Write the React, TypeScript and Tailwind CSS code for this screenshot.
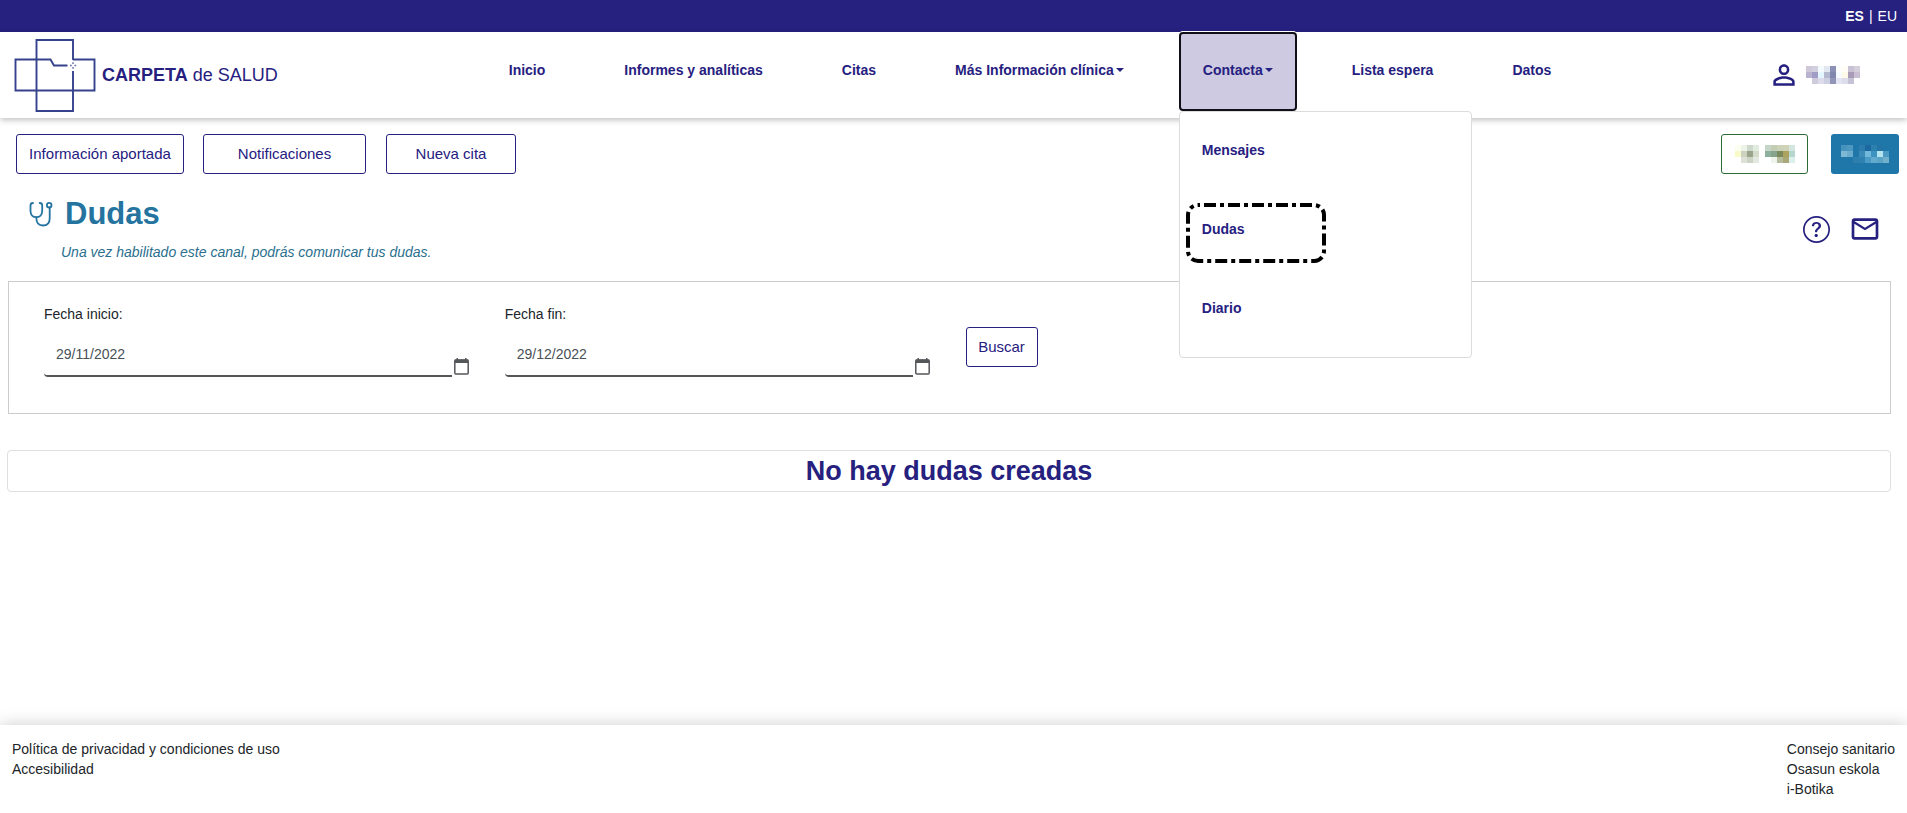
import { useState } from 'react'
import { BsQuestionCircle } from 'react-icons/bs'
import { MdMailOutline, MdPersonOutline } from 'react-icons/md'

const navItems = [
  { label: 'Inicio' },
  { label: 'Informes y analíticas' },
  { label: 'Citas' },
  { label: 'Más Información clínica', menu: [] },
  { label: 'Contacta', menu: ['Mensajes', 'Dudas', 'Diario'] },
  { label: 'Lista espera' },
  { label: 'Datos' },
]

const userTiles = [
  ['#cfc8d8', '#d2cfdf', '#f4fbff', '#e3e8f0', '#8b90b4', '#fdfdfd', '#fffdf5', '#c9c2d4', '#d5cfdc'],
  ['#b9b3cf', '#9f9cc6', '#e4f7ff', '#b5b9d0', '#8287ae', '#f6fbff', '#fff9ea', '#a79bb8', '#c8c0d2'],
  ['#ffffff', '#cfcbdd', '#dddcea', '#cdd0e0', '#9294b8', '#e4e4f2', '#dcdcea', '#c6c3d6', '#ffffff'],
]

const greenTiles = [
  ['#fbfff0', '#eef3e8', '#cfd8cc', '#e2ebe0', '#ffffff', '#c4d6c8', '#c3cdb4', '#cdd3b8', '#cfd4b8', '#d4e6e0'],
  ['#f8fbc8', '#cdd1c0', '#9aa48c', '#d4dccc', '#ffffff', '#8db09c', '#86a48c', '#7a8a5c', '#ada25e', '#b4d6cc'],
  ['#ffffff', '#dde0d4', '#cdd3c4', '#e3e8e0', '#ffffff', '#ffffff', '#eef3ec', '#b4bc9c', '#a9a878', '#dcefec'],
]

const blueTiles = [
  ['#4593bd', '#4c98c1', '#1f76a8', '#2c7cae', '#1b69a0', '#2c80ae', '#2475a6', '#1f76a8'],
  ['#7fb8d4', '#6aacce', '#1f76a8', '#3a8ab8', '#72b8da', '#3c92c0', '#b4e4f0', '#4b9ac4'],
  ['#1f76a8', '#1f76a8', '#2d7fad', '#2f82b0', '#4a9cc6', '#62aace', '#5aa4c8', '#72b0cc'],
]

function Tiles({ rows }: { rows: string[][] }) {
  return (
    <svg width={rows[0].length * 6} height={rows.length * 6} shapeRendering="crispEdges" aria-hidden="true">
      {rows.map((row, y) =>
        row.map((color, x) => <rect key={`${x}-${y}`} x={x * 6} y={y * 6} width="6" height="6" fill={color} />)
      )}
    </svg>
  )
}

function Logo() {
  return (
    <svg width="82" height="74" viewBox="0 0 82 74" fill="none" stroke="#36438c" strokeWidth="1.9" aria-hidden="true">
      <path d="M59 22V2H22.500V73H59V33" />
      <path d="M59 21.500H80.500V52.500H1.500V21.500H36.500L40 27.500H53.500" />
      <path d="M56 27.500h1.800M60.400 27.500h1.800M59 24.300v1.800M59 29v1.800" strokeWidth="1.500" stroke="#6a74ac" />
    </svg>
  )
}

function Stethoscope() {
  return (
    <svg width="24" height="26" viewBox="0 0 24 26" fill="none" stroke="#2574a0" strokeWidth="1.8" strokeLinecap="round" aria-hidden="true">
      <path d="M4 2C2.200 2 1.500 2.800 1.500 4.500V10c0 3.800 2.400 6.200 5.800 6.200S13.200 13.800 13.200 10V4.500C13.200 2.800 12.500 2 10.700 2" />
      <path d="M7.300 16.500C7.300 21.500 9.500 24.500 14 24.500s6.700-2.600 6.700-7V6.500" />
      <circle cx="20.200" cy="4.200" r="2.300" />
    </svg>
  )
}

function CalendarIcon() {
  return (
    <svg width="15" height="17" viewBox="0 0 15 17" aria-hidden="true">
      <path d="M2.500 0h1.500v2h-1.500zM11 0h1.500v2H11z" fill="#55565a" />
      <rect x="0.800" y="2" width="13.400" height="14" rx="1" fill="none" stroke="#55565a" strokeWidth="1.500" />
      <path d="M0.800 1.500h13.400v3.500H0.800z" fill="#55565a" />
    </svg>
  )
}

function Caret() {
  return (
    <svg width="8" height="4" viewBox="0 0 8 4" className="ml-0.5" aria-hidden="true">
      <path d="M0 0h8L4 4z" fill="currentColor" />
    </svg>
  )
}

function DateField({ id, label, initial }: { id: string; label: string; initial: string }) {
  const [value, setValue] = useState(initial)

  return (
    <div className="pr-5 pl-4">
      <label htmlFor={id} className="block text-sm text-[#212529]">
        {label}
      </label>
      <div className="mt-3 flex items-end gap-0.5">
        <input
          id={id}
          value={value}
          onChange={(e) => setValue(e.target.value)}
          className="h-[41px] min-w-0 flex-1 rounded-l border-b-2 border-[#55565a] bg-transparent px-3 pb-1 text-sm text-[#495057] outline-none"
        />
        <button type="button" aria-label="Abrir calendario" className="mb-0.5">
          <CalendarIcon />
        </button>
      </div>
    </div>
  )
}

function ContactMenu({ items }: { items: string[] }) {
  return (
    <ul className="absolute top-full left-0 z-10 w-[293px] rounded border border-[#dcdcdc] bg-white pb-2">
      {items.map((item) => (
        <li key={item} className="relative">
          <a href="#" className="flex h-[79px] items-center px-[22px] pb-1 font-bold">
            {item}
          </a>
          {item === 'Dudas' && (
            <svg className="pointer-events-none absolute top-3 left-1.5" width="140" height="60" aria-hidden="true">
              <rect
                x="2"
                y="2"
                width="136"
                height="56"
                rx="10"
                fill="none"
                stroke="#000"
                strokeWidth="4"
                strokeDasharray="12 4 4 4"
                strokeDashoffset="-6"
              />
            </svg>
          )}
        </li>
      ))}
    </ul>
  )
}

function Header() {
  const [open, setOpen] = useState('Contacta')

  return (
    <header className="relative z-10 flex h-[86px] bg-white shadow-[0_2px_6px_rgba(0,0,0,0.25)]">
      <a href="#" className="flex w-1/4 shrink-0 items-center pl-3.5 text-lg">
        <Logo />
        <span className="ml-1.5 pb-px">
          <b>CARPETA</b> de SALUD
        </span>
      </a>
      <nav className="flex items-start gap-[31px] pl-2 text-sm font-bold whitespace-nowrap">
        {navItems.map(({ label, menu }) =>
          menu ? (
            <div key={label} className="relative">
              <button
                type="button"
                aria-expanded={open === label}
                onClick={() => setOpen(open === label ? '' : label)}
                className={`flex h-[79px] items-center rounded border-2 px-[22px] pb-1 ${
                  open === label ? 'border-[#101018] bg-[#cdcae1] shadow-[0_0_0_1px_#fff]' : 'border-transparent'
                }`}
              >
                {label}
                <Caret />
              </button>
              {open === label && menu.length > 0 && <ContactMenu items={menu} />}
            </div>
          ) : (
            <a key={label} href="#" className="flex h-[79px] items-center px-6 pb-1">
              {label}
            </a>
          )
        )}
      </nav>
      <a href="#" aria-label="Usuario" className="ml-auto flex items-center gap-1.5 pr-[47px]">
        <MdPersonOutline className="size-8" />
        <Tiles rows={userTiles} />
      </a>
    </header>
  )
}

export default function App() {
  return (
    <div className="flex min-h-screen flex-col bg-white font-['Liberation_Sans',Arial,sans-serif] text-[#26207f]">
      <div className="flex h-8 items-center justify-end bg-[#26207f] px-2.5 text-sm text-white">
        <a href="#" className="font-bold">
          ES
        </a>
        <span className="px-[5px]">|</span>
        <a href="#">EU</a>
      </div>

      <Header />

      <main>
        <div className="flex items-center px-2 pt-4 text-[15px]">
          <button type="button" className="ml-2 h-10 w-[168px] rounded-[3px] border border-[#26207f]">
            Información aportada
          </button>
          <button type="button" className="ml-[19px] h-10 w-[163px] rounded-[3px] border border-[#26207f]">
            Notificaciones
          </button>
          <button type="button" className="ml-5 h-10 w-[130px] rounded-[3px] border border-[#26207f]">
            Nueva cita
          </button>
          <button
            type="button"
            className="ml-auto flex h-10 w-[87px] items-center justify-center rounded-[3px] border border-[#2b6b35]"
          >
            <Tiles rows={greenTiles} />
          </button>
          <button type="button" className="ml-[23px] flex h-10 w-[68px] items-center justify-center rounded-[3px] bg-[#1f76a8]">
            <Tiles rows={blueTiles} />
          </button>
        </div>

        <div className="flex items-center justify-between pt-5 pr-[26px] pl-[29px]">
          <div className="text-[#2574a0]">
            <h1 className="flex items-center gap-3 text-[31px] leading-10 font-bold">
              <Stethoscope />
              Dudas
            </h1>
            <p className="mt-2 pl-8 text-sm text-[#2a6f8f] italic">Una vez habilitado este canal, podrás comunicar tus dudas.</p>
          </div>
          <div className="flex items-center gap-[19px] pt-0.5">
            <button type="button" aria-label="Ayuda">
              <BsQuestionCircle className="size-[27px]" />
            </button>
            <button type="button" aria-label="Correo">
              <MdMailOutline className="size-8" />
            </button>
          </div>
        </div>

        <form className="mt-[19px] mr-4 ml-2 grid grid-cols-4 border border-[#cccccc] px-[19px] pt-[22px] pb-9" onSubmit={(e) => e.preventDefault()}>
          <DateField id="fecha-inicio" label="Fecha inicio:" initial="29/11/2022" />
          <DateField id="fecha-fin" label="Fecha fin:" initial="29/12/2022" />
          <div className="px-4 pt-[23px]">
            <button type="submit" className="h-10 w-[72px] rounded-[3px] border border-[#26207f] text-[15px]">
              Buscar
            </button>
          </div>
        </form>

        <h2 className="mt-9 mr-4 ml-[7px] rounded border border-[#dfdfdf] text-center text-[27px] leading-10 font-bold">
          No hay dudas creadas
        </h2>
      </main>

      <footer className="mt-auto flex justify-between px-3 py-3.5 text-sm text-[#212529] shadow-[0_0_16px_rgba(0,0,0,0.2)]">
        <ul>
          <li>
            <a href="#">Política de privacidad y condiciones de uso</a>
          </li>
          <li>
            <a href="#">Accesibilidad</a>
          </li>
        </ul>
        <ul>
          <li>
            <a href="#">Consejo sanitario</a>
          </li>
          <li>
            <a href="#">Osasun eskola</a>
          </li>
          <li>
            <a href="#">i-Botika</a>
          </li>
        </ul>
      </footer>
    </div>
  )
}
